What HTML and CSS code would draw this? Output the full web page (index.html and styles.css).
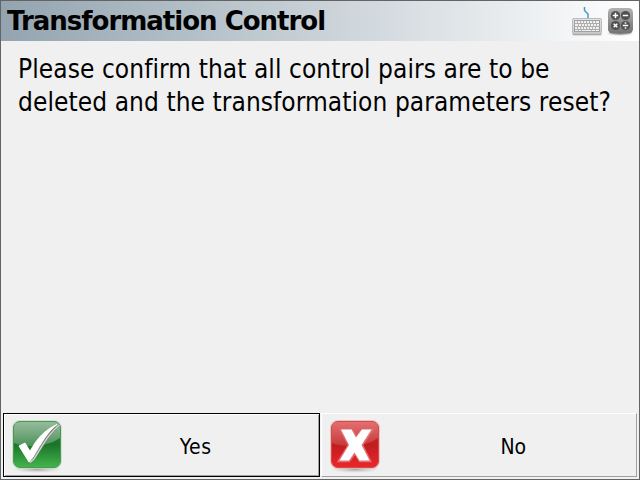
FILE: index.html
```
<!DOCTYPE html>
<html lang="en">
<head>
<meta charset="utf-8">
<title>Transformation Control</title>
<link rel="stylesheet" href="styles.css">
</head>
<body>
<main class="window">
  <header class="titlebar">
    <h1 class="title">Transformation Control</h1>
    <svg class="keyboard" width="32" height="30" viewBox="0 0 32 30">
      <defs><linearGradient id="kb" x2="0" y2="1"><stop stop-color="#e4e4e4"/><stop offset="1" stop-color="#c8c8c8"/></linearGradient></defs>
      <path d="M13.500 1v3.500l3.500 3.500v4" fill="none" stroke="#4a9bc8" stroke-width="1.500"/>
      <rect x="1" y="12" width="30" height="18" rx="2" fill="#ddd"/>
      <rect x="1.500" y="12.500" width="29" height="15.500" rx="1.500" fill="url(#kb)" stroke="#bcbcbc"/>
      <path d="M2 28.500h28" stroke="#aaa"/>
      <rect x="3.500" y="14.500" width="25" height="11" fill="#efefef" stroke="#a0a0a0"/>
      <path d="M4 17.500h24M4 20.500h24M4 23.500h24" stroke="#a6a6a6" stroke-width=".9"/>
      <path d="M6.500 15v2M9.500 15v2M12.500 15v2M15.500 15v2M18.500 15v2M21.500 15v2M24.500 15v2M7.500 18v2M10.500 18v2M13.500 18v2M16.500 18v2M19.500 18v2M22.500 18v2M25.500 17v4M6.500 21v2M9.500 21v2M12.500 21v2M15.500 21v2M18.500 21v2M21.500 21v2M24.500 21v2M7.500 24v2M10.500 24v2M20.500 24v2M24.500 24v2" stroke="#aaa" stroke-width=".9"/>
    </svg>
    <svg class="calculator" width="28" height="30" viewBox="0 0 28 30">
      <defs>
        <linearGradient id="calc" x2="0" y2="1"><stop stop-color="#b2b2b2"/><stop offset=".5" stop-color="#929292"/><stop offset="1" stop-color="#737373"/></linearGradient>
        <radialGradient id="shade"><stop stop-color="#777"/><stop offset="1" stop-color="#999" stop-opacity="0"/></radialGradient>
      </defs>
      <ellipse cx="14" cy="26.500" rx="14" ry="2.500" fill="url(#shade)"/>
      <rect x="2" y="1" width="25" height="25.500" rx="4.500" fill="url(#calc)"/>
      <g fill="#505052"><circle cx="9.500" cy="8.500" r="4.600"/><circle cx="19.500" cy="8.500" r="4.600"/><circle cx="9.500" cy="18.500" r="4.600"/><circle cx="19.500" cy="18.500" r="4.600"/></g>
      <path d="M6.800 8.500h5.400M9.500 5.800v5.400M16.800 8.500h5.400M7.700 16.700l3.600 3.600M11.300 16.700l-3.600 3.600M16.800 18.500h5.400" stroke="#fff" stroke-width="1.500"/>
      <path d="M18.700 15.200h1.600v1.600h-1.600zM18.700 20.200h1.600v1.600h-1.600z" fill="#fff"/>
    </svg>
  </header>
  <section class="message">
    <p class="line">Please confirm that all control pairs are to be</p>
    <p class="line">deleted and the transformation parameters reset?</p>
  </section>
  <footer class="actions">
    <div class="button default">
      <svg class="icon" width="54" height="56" viewBox="0 0 54 56">
        <defs>
          <linearGradient id="green" x2="0" y2="1"><stop stop-color="#2c7838"/><stop offset=".5" stop-color="#1b742b"/><stop offset="1" stop-color="#42b54b"/></linearGradient>
          <linearGradient id="gloss" x2="0" y2="1"><stop stop-color="#fff" stop-opacity=".5"/><stop offset="1" stop-color="#fff" stop-opacity=".22"/></linearGradient>
          <radialGradient id="drop"><stop stop-color="#888" stop-opacity=".7"/><stop offset="1" stop-color="#bbb" stop-opacity="0"/></radialGradient>
        </defs>
        <ellipse cx="27" cy="51.500" rx="25" ry="3.500" fill="url(#drop)"/>
        <rect x="2" y="2" width="50" height="49" rx="8" fill="#b9d5bd" opacity=".6"/>
        <rect x="3.500" y="3.500" width="47" height="46" rx="6.500" fill="url(#green)" stroke="#4b9855"/>
        <path d="M4 25V10q0-6 6-6h34q6 0 6 6v10Q38 28 21 28Q10 28 4 25Z" fill="url(#gloss)"/>
        <path d="M11 29l5-3 5 8C27 21 36 12 50 6v2C41 15 35 26 25 41l-5 4z" fill="#7e8780"/>
        <path d="M49.500 7C40 14 34 25 24 41l-4 3.500" fill="none" stroke="#d5dad6" stroke-width="1.200"/>
        <path d="M9 28l6-3 5 8.500C27 20 35 12 47 6.500 38 13 32 24 23 39l-4 5z" fill="#fff" stroke="#fff"/>
      </svg>
      <span class="label yes">Yes</span>
    </div>
    <div class="button">
      <svg class="icon" width="54" height="56" viewBox="0 0 54 56">
        <defs><linearGradient id="red" x2="0" y2="1"><stop stop-color="#d8393b"/><stop offset=".5" stop-color="#bf1d20"/><stop offset="1" stop-color="#ed252a"/></linearGradient></defs>
        <ellipse cx="27" cy="51.500" rx="25" ry="3.500" fill="url(#drop)"/>
        <rect x="2" y="2" width="50" height="49" rx="8" fill="#e8aaaa" opacity=".65"/>
        <rect x="3.500" y="3.500" width="47" height="46" rx="6.500" fill="url(#red)" stroke="#d34a4b"/>
        <path d="M4 25V10q0-6 6-6h34q6 0 6 6v10Q38 28 21 28Q10 28 4 25Z" fill="url(#gloss)" opacity=".55"/>
        <path d="M13 12h11l4 8 6-8h10L34 27l8 16H32l-5-8-6 8H11l10-16z" fill="#a64143" stroke="#df7072" stroke-width="2.500"/>
        <path d="M13 11.500h10.500l4.500 8 6-8h9.500L33.500 27 41.500 42.500H31.500l-5-8-5.500 8H11.500L21 27z" fill="#fff"/>
      </svg>
      <span class="label">No</span>
    </div>
  </footer>
</main>
</body>
</html>
```
FILE: styles.css
```
* { box-sizing: border-box; }
body { margin: 0; color: #000; font-family: "DejaVu Sans Condensed", "DejaVu Sans", sans-serif; font-variant-ligatures: none; }
.window { width: 640px; height: 480px; display: flex; flex-direction: column; background: #f0f0f0; border: 1px solid #646464; }
.titlebar { height: 40px; flex: none; display: flex; align-items: flex-start; padding: 0 5px 0 6px; background: linear-gradient(90deg, #93a4b0, #fff); }
.title { margin: 0; flex: 1; font-family: "DejaVu Sans", sans-serif; font-size: 26px; line-height: 40px; font-weight: bold; letter-spacing: -1px; white-space: nowrap; }
.keyboard { margin: 5px 3px 0 0; }
.calculator { margin-top: 6px; }
.message { flex: 1; padding: 12px 0 0 17px; }
.line { margin: 0; font-size: 26px; line-height: 33px; letter-spacing: 0.08px; white-space: nowrap; }
.actions { display: flex; gap: 1px; padding: 0 2px; height: 66px; }
.button { flex: 1; height: 64px; display: flex; align-items: flex-start; border: 1px solid; border-color: #fff #a0a0a0 #a0a0a0 #fff; padding: 4px 0 0 6px; }
.default { border-color: #000; box-shadow: inset 1px 1px #fff, inset -1px -1px #a0a0a0; }
.icon { flex: none; }
.label { flex: 1; padding-left: 9px; text-align: center; font-size: 21px; line-height: 58px; }
.yes { letter-spacing: 0.6px; }
```
